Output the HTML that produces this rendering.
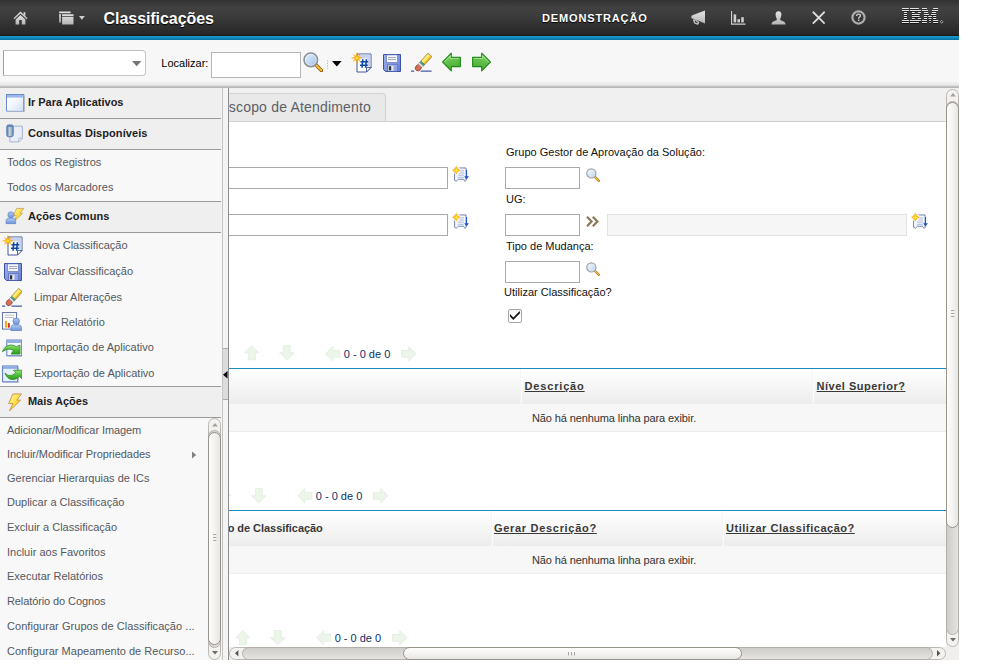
<!DOCTYPE html>
<html><head><meta charset="utf-8"><title>Classificações</title>
<style>
html,body{margin:0;padding:0;background:#fff;}
body{width:989px;height:665px;overflow:hidden;position:relative;font-family:"Liberation Sans",sans-serif;}
.t{position:absolute;white-space:nowrap;font-family:"Liberation Sans",sans-serif;}
#page{position:absolute;left:0;top:0;width:959px;height:660px;overflow:hidden;background:#fff;}
</style></head><body>
<svg width="0" height="0" style="position:absolute"><defs>

<linearGradient id="gGreen" x1="0" y1="0" x2="0" y2="1"><stop offset="0" stop-color="#9be27a"/><stop offset="0.5" stop-color="#4fc03a"/><stop offset="1" stop-color="#2d9a1e"/></linearGradient>
<linearGradient id="gGray" x1="0" y1="0" x2="0" y2="1"><stop offset="0" stop-color="#e4e4e4"/><stop offset="1" stop-color="#b4b4b4"/></linearGradient>
<linearGradient id="gLens" x1="0" y1="0" x2="1" y2="1"><stop offset="0" stop-color="#e8f2fc"/><stop offset="1" stop-color="#9cc0e8"/></linearGradient>
<linearGradient id="gWin" x1="0" y1="0" x2="1" y2="1"><stop offset="0" stop-color="#ffffff"/><stop offset="0.5" stop-color="#f2f6fc"/><stop offset="1" stop-color="#cfdcf2"/></linearGradient>
<linearGradient id="gBlueU" x1="0" y1="0" x2="0" y2="1"><stop offset="0" stop-color="#b4ccf0"/><stop offset="1" stop-color="#6c94d8"/></linearGradient>
<linearGradient id="gYel" x1="0" y1="0" x2="1" y2="1"><stop offset="0" stop-color="#fff6b0"/><stop offset="0.5" stop-color="#ffe040"/><stop offset="1" stop-color="#f4b828"/></linearGradient>
<linearGradient id="gCyl" x1="0" y1="0" x2="1" y2="0"><stop offset="0" stop-color="#5f8098"/><stop offset="0.45" stop-color="#c4d8e4"/><stop offset="1" stop-color="#6c8ca4"/></linearGradient>

<linearGradient id="gSave" x1="0" y1="0" x2="1" y2="1"><stop offset="0" stop-color="#a2b4f2"/><stop offset="1" stop-color="#667ed4"/></linearGradient>
<linearGradient id="gLens2" x1="0" y1="0" x2="1" y2="1"><stop offset="0" stop-color="#f8fbfe"/><stop offset="1" stop-color="#bcd4ec"/></linearGradient>
<linearGradient id="gGreenL" x1="0" y1="0" x2="0.3" y2="1"><stop offset="0" stop-color="#a6e28c"/><stop offset="0.5" stop-color="#66c24e"/><stop offset="1" stop-color="#48aa34"/></linearGradient>
<symbol id="home" viewBox="0 0 15 14">
 <path d="M7.5 0.6L0.4 7.3L1.4 8.3L7.5 2.6L13.6 8.3L14.6 7.3Z" fill="url(#gGray)"/>
 <path d="M7.5 3.9L2.6 8.5V13.4H6.2V9H8.8V13.4H12.4V8.5Z" fill="url(#gGray)"/>
 <rect x="10.6" y="1.2" width="1.8" height="3.4" fill="#d4d4d4"/>
</symbol>
<symbol id="apps" viewBox="0 0 15 14">
 <path d="M0.2 0.6H11.6V2.2H0.2Z M0.2 2.9H1.9V11.4H0.2Z" fill="url(#gGray)"/>
 <path d="M3.1 3.2H14.5V5H3.1Z M3.1 5.8H14.5V13.4H3.1Z" fill="url(#gGray)"/>
</symbol>
<symbol id="mega" viewBox="0 0 15 15">
 <path d="M14 0.4V13.6L4.6 9.4L1.4 8.6C0.7 8.4 0.4 8 0.4 7.4V6.4C0.4 5.8 0.7 5.4 1.4 5.2Z" fill="url(#gGray)"/>
 <path d="M2.6 10L4.6 9.9L7.6 12.6L6.6 14.2L3.6 12.8Z" fill="none" stroke="#c0c0c0" stroke-width="1.3" stroke-linejoin="round"/>
</symbol>
<symbol id="chart" viewBox="0 0 15 14">
 <path d="M0.5 0V13.2H14.5" stroke="#cfcfcf" stroke-width="1.2" fill="none"/>
 <rect x="2.6" y="3.4" width="2.6" height="8" fill="#cfcfcf"/><rect x="6.4" y="8.2" width="2.6" height="3.2" fill="#cfcfcf"/><rect x="10.2" y="6.2" width="2.6" height="5.2" fill="#cfcfcf"/>
</symbol>
<symbol id="user" viewBox="0 0 15 14">
 <path d="M7.5 0.2C9.6 0.2 10.6 1.8 10.4 4C10.2 6 9.4 7 9.2 8C9.1 9 9.6 9.4 11.4 10C13.4 10.7 14.4 11.4 14.6 13.6H0.4C0.6 11.4 1.6 10.7 3.6 10C5.4 9.4 5.9 9 5.8 8C5.6 7 4.8 6 4.6 4C4.4 1.8 5.4 0.2 7.5 0.2Z" fill="url(#gGray)"/>
</symbol>
<symbol id="xclose" viewBox="0 0 14 14"><path d="M0.8 0.8L13.2 13.2M13.2 0.8L0.8 13.2" stroke="#dcdcdc" stroke-width="1.9" fill="none"/></symbol>
<symbol id="help" viewBox="0 0 15 15">
 <circle cx="7.5" cy="7.5" r="6.1" fill="none" stroke="#aeaeae" stroke-width="2.2"/>
 <path d="M5.6 5.9C5.6 4.7 6.5 4.1 7.5 4.1C8.6 4.1 9.4 4.7 9.4 5.7C9.4 7.1 7.6 7 7.6 8.7" stroke="#c8c8c8" stroke-width="1.4" fill="none"/><rect x="6.9" y="9.6" width="1.5" height="1.5" fill="#c8c8c8"/>
</symbol>
<symbol id="ibm" viewBox="0 0 55 25">
<path d="M6.95 5.89h6.95v0.9h-6.95zM14.91 5.89h9.01v0.9h-9.01zM26.97 5.89h5.01v0.9h-5.01zM38.10 5.89h5.01v0.9h-5.01zM6.95 7.90h6.95v0.9h-6.95zM14.91 7.90h10.96v0.9h-10.96zM26.97 7.90h6.12v0.9h-6.12zM36.99 7.90h6.12v0.9h-6.12zM8.90 9.95h3.06v0.9h-3.06zM16.96 9.95h2.78v0.9h-2.78zM22.80 9.95h3.06v0.9h-3.06zM28.92 9.95h4.17v0.9h-4.17zM36.99 9.95h4.17v0.9h-4.17zM8.90 12.01h3.06v0.9h-3.06zM16.96 12.01h7.79v0.9h-7.79zM28.92 12.01h5.01v0.9h-5.01zM36.15 12.01h5.01v0.9h-5.01zM8.90 14.01h3.06v0.9h-3.06zM16.96 14.01h7.79v0.9h-7.79zM28.92 14.01h3.06v0.9h-3.06zM33.09 14.01h3.89v0.9h-3.89zM38.10 14.01h3.06v0.9h-3.06zM8.90 15.96h3.06v0.9h-3.06zM16.96 15.96h2.78v0.9h-2.78zM22.80 15.96h3.06v0.9h-3.06zM28.92 15.96h3.06v0.9h-3.06zM33.65 15.96h2.78v0.9h-2.78zM38.10 15.96h3.06v0.9h-3.06zM6.95 18.02h6.95v0.9h-6.95zM14.91 18.02h10.96v0.9h-10.96zM26.97 18.02h5.01v0.9h-5.01zM34.20 18.02h1.67v0.9h-1.67zM38.10 18.02h5.01v0.9h-5.01zM6.95 20.08h6.95v0.9h-6.95zM14.91 20.08h9.01v0.9h-9.01zM26.97 20.08h5.01v0.9h-5.01zM34.48 20.08h1.11v0.9h-1.11zM38.10 20.08h5.01v0.9h-5.01z" fill="#000" fill-opacity=".55"/>
<path d="M6.95 4.89h6.95v1h-6.95zM14.91 4.89h9.01v1h-9.01zM26.97 4.89h5.01v1h-5.01zM38.10 4.89h5.01v1h-5.01zM6.95 6.90h6.95v1h-6.95zM14.91 6.90h10.96v1h-10.96zM26.97 6.90h6.12v1h-6.12zM36.99 6.90h6.12v1h-6.12zM8.90 8.95h3.06v1h-3.06zM16.96 8.95h2.78v1h-2.78zM22.80 8.95h3.06v1h-3.06zM28.92 8.95h4.17v1h-4.17zM36.99 8.95h4.17v1h-4.17zM8.90 11.01h3.06v1h-3.06zM16.96 11.01h7.79v1h-7.79zM28.92 11.01h5.01v1h-5.01zM36.15 11.01h5.01v1h-5.01zM8.90 13.01h3.06v1h-3.06zM16.96 13.01h7.79v1h-7.79zM28.92 13.01h3.06v1h-3.06zM33.09 13.01h3.89v1h-3.89zM38.10 13.01h3.06v1h-3.06zM8.90 14.96h3.06v1h-3.06zM16.96 14.96h2.78v1h-2.78zM22.80 14.96h3.06v1h-3.06zM28.92 14.96h3.06v1h-3.06zM33.65 14.96h2.78v1h-2.78zM38.10 14.96h3.06v1h-3.06zM6.95 17.02h6.95v1h-6.95zM14.91 17.02h10.96v1h-10.96zM26.97 17.02h5.01v1h-5.01zM34.20 17.02h1.67v1h-1.67zM38.10 17.02h5.01v1h-5.01zM6.95 19.08h6.95v1h-6.95zM14.91 19.08h9.01v1h-9.01zM26.97 19.08h5.01v1h-5.01zM34.48 19.08h1.11v1h-1.11zM38.10 19.08h5.01v1h-5.01z" fill="#e2e2e2"/>
<path d="M46.6 17.3L48 18.8L46.6 20.3L45.2 18.8Z" fill="none" stroke="#c8c8c8" stroke-width="0.7"/>
</symbol>
<symbol id="mag" viewBox="0 0 20 20">
 <path d="M11.8 11.8L18 18" stroke="#8a5a10" stroke-width="3.4" stroke-linecap="round"/>
 <path d="M12 12L17.8 17.8" stroke="#f8b830" stroke-width="2" stroke-linecap="round"/>
 <circle cx="7.6" cy="7.6" r="6.6" fill="url(#gLens)" stroke="#8a8e94" stroke-width="1.6"/>
 <circle cx="7.6" cy="7.6" r="5.4" fill="none" stroke="#fff" stroke-opacity=".6" stroke-width="0.8"/>
</symbol>
<symbol id="mags" viewBox="0 0 20 20">
 <path d="M11.8 11.8L18 18" stroke="#9a7020" stroke-width="3.4" stroke-linecap="round"/>
 <path d="M12 12L17.8 17.8" stroke="#f8c040" stroke-width="1.8" stroke-linecap="round"/>
 <circle cx="7.6" cy="7.6" r="6.5" fill="url(#gLens2)" stroke="#a0a4aa" stroke-width="1.7"/>
</symbol>
<symbol id="star" viewBox="0 0 12 12"><path d="M6 0L6.75 4.2L9.7 2.3L7.8 5.25L12 6L7.8 6.75L9.7 9.7L6.75 7.8L6 12L5.25 7.8L2.3 9.7L4.2 6.75L0 6L4.2 5.25L2.3 2.3L5.25 4.2Z" fill="#ffa200" stroke="#ffa200" stroke-width="0.35"/><circle cx="6" cy="6" r="1.7" fill="#ffe030"/></symbol>
<symbol id="newdoc" viewBox="0 0 21 21">
 <path d="M6 2H20V15.5L15.5 20H6Z" fill="#fff" stroke="#44549a" stroke-width="1"/>
 <path d="M8.5 2.5H19.5V14.5H16.5V6.5H8.5Z" fill="#c8d4ee"/>
 <path d="M20 15.5H15.5V20Z" fill="#fff" stroke="#44549a" stroke-width="0.9"/>
 <path d="M11.8 7.2L11 15.8M15.4 7.2L14.6 15.8M9.4 9.8H17.2M9 13.2H16.8" stroke="#0c48a4" stroke-width="1.6" fill="none"/>
 <use href="#star" x="0.2" y="0.2" width="11.4" height="11.4"/>
</symbol>
<symbol id="save" viewBox="0 0 18 18">
 <path d="M0.5 0.5H17.5V17.5H2.5L0.5 15.5Z" fill="url(#gSave)" stroke="#3c50a4" stroke-width="1"/>
 <rect x="3.5" y="0.9" width="11" height="7.6" fill="#f6f8fe" stroke="#5468b4" stroke-width="0.6"/>
 <path d="M5 3.5H13M5 5.5H13" stroke="#a0a8c4" stroke-width="1"/>
 <rect x="4.5" y="11" width="10" height="6.2" fill="#e4e8f4" stroke="#3c50a4" stroke-width="0.6"/>
 <rect x="10.5" y="11.4" width="3.6" height="5.6" fill="#8ea2e4"/>
 <rect x="5.8" y="12.2" width="2.4" height="4.2" fill="#2c3444"/>
</symbol>
<symbol id="eraser" viewBox="0 0 21 19">
 <path d="M0 18.2H3.2M9.6 18.2H20.6" stroke="#4a58a8" stroke-width="1.3"/>
 <ellipse cx="7.4" cy="14.6" rx="3.5" ry="2.8" transform="rotate(-48 7.4 14.6)" fill="#d4705a" stroke="#8a3a28" stroke-width="0.7"/>
 <path d="M17 0.2L20.9 3.7L13.7 11.7L9.8 8.2Z" fill="url(#gYel)" stroke="#8c7424" stroke-width="0.7"/>
 <path d="M18 1.8L11.2 9.2" stroke="#fff8c8" stroke-width="1" stroke-opacity=".8"/>
 <path d="M19.9 3.3L13.2 10.9" stroke="#c89a18" stroke-width="1" stroke-opacity=".7"/>
 <path d="M9.8 8.2L13.7 11.7L12.3 13.2L8.4 9.7Z" fill="#4c9c94" stroke="#2c6c68" stroke-width="0.4"/>
 <path d="M8.4 9.7L12.3 13.2L11.2 14.4L7.3 10.9Z" fill="#f4f4f4" stroke="#888" stroke-width="0.4"/>
</symbol>
<symbol id="garrow" viewBox="0 0 20 20"><path d="M1.6 10L10.3 1.1V5.4H19.4V14.6H10.3V18.9Z" fill="url(#gGreenL)" stroke="#1f8a1a" stroke-width="1.1" stroke-linejoin="round"/><path d="M3.2 10L9.3 3.8V6.4H18.4" fill="none" stroke="#c8f0b4" stroke-opacity=".7" stroke-width="0.9"/></symbol>
<symbol id="parrow" viewBox="0 0 15 15"><path d="M0.5 7.5L7.5 0.5V4.2H14.5V10.8H7.5V14.5Z" fill="#edf5eb" stroke="#e2eee0" stroke-width="0.8" stroke-linejoin="round"/></symbol>
<symbol id="window" viewBox="0 0 19 18">
 <path d="M1.5 17.6H18.6V1.5" stroke="#c0c4d0" stroke-width="0.9" fill="none"/>
 <rect x="0.5" y="0.5" width="17.2" height="16.4" fill="url(#gWin)" stroke="#6a8acc" stroke-width="1"/>
 <rect x="1" y="1" width="16.2" height="2.6" fill="#9cb8e8"/>
 <path d="M1.5 4V16.4H17" stroke="#fff" stroke-width="0.8" fill="none" stroke-opacity=".8"/>
</symbol>
<symbol id="query" viewBox="0 0 18 19">
 <path d="M3.9 2.2H16.4V14.2L12.8 17.9H3.9Z" fill="#e9edf9" stroke="#a4acd0" stroke-width="0.9"/>
 <path d="M16.4 14.2H12.8V17.9Z" fill="#fff" stroke="#a4acd0" stroke-width="0.8"/>
 <rect x="0.8" y="0.9" width="6.4" height="11.8" rx="1.8" fill="url(#gCyl)" stroke="#4a74a8" stroke-width="0.9"/>
 <ellipse cx="4" cy="1.9" rx="3" ry="1" fill="#5c86b8"/>
</symbol>
<symbol id="bolt" viewBox="0 0 14 18.6"><path d="M4.9 0.9H13.5L8.8 7.2H12.6L1.4 18L4.9 10.6H0.6Z" fill="url(#gYel)" stroke="#c89858" stroke-width="1" stroke-linejoin="round"/></symbol>
<symbol id="bluser" viewBox="0 0 12 14">
 <circle cx="6" cy="3.8" r="3.3" fill="url(#gBlueU)" stroke="#5c84cc" stroke-width="0.8"/>
 <path d="M0.6 13.4V10.4C0.6 8.4 2.2 7.4 3.6 7.4H8.4C9.8 7.4 11.4 8.4 11.4 10.4V13.4Z" fill="url(#gBlueU)" stroke="#5c84cc" stroke-width="0.8"/>
</symbol>
<symbol id="acoes" viewBox="0 0 20 18">
 <path d="M11.6 1.4H18.8L15 6.2H17.6L9.4 14.2L11.4 8.6H8.4Z" fill="url(#gYel)" stroke="#c8a060" stroke-width="0.8" stroke-linejoin="round"/>
 <use href="#bluser" x="0.4" y="3.8" width="11" height="14"/>
</symbol>
<symbol id="report" viewBox="0 0 21 20">
 <rect x="0.5" y="0.5" width="14.5" height="17" fill="#fff" stroke="#5a6ea8" stroke-width="1"/>
 <path d="M3 3.2H12.6M3 5.6H12.6" stroke="#b4bcd0" stroke-width="1"/>
 <rect x="3" y="9" width="2" height="7" fill="#f0a810"/><rect x="6" y="11.4" width="2" height="4.6" fill="#d82818"/>
 <use href="#bluser" x="8.4" y="5.6" width="12.4" height="14.2"/>
</symbol>
<symbol id="import" viewBox="0 0 21 18">
 <path d="M5.6 17.4H20.8V1.5" stroke="#c0c4d0" stroke-width="0.8" fill="none"/>
 <rect x="4.9" y="0.9" width="15.2" height="16" fill="#f4f8fe" stroke="#5878c0" stroke-width="1"/>
 <rect x="5.4" y="1.4" width="14.2" height="2.4" fill="#8cacE4"/>
 <path d="M0.4 12.8C2.5 6.6 9 4 14.6 7.6L18.4 6V15.2H9.2L11.8 11.6C8 9.2 4 10 0.4 12.8Z" fill="url(#gGreen)" stroke="#2c8a1c" stroke-width="0.8" stroke-linejoin="round"/>
</symbol>
<symbol id="export" viewBox="0 0 21 18">
 <path d="M1.2 17.6H16.8V1.5" stroke="#c0c4d0" stroke-width="0.8" fill="none"/>
 <rect x="0.6" y="0.8" width="15.4" height="16.2" fill="#e4eefc" stroke="#5878c0" stroke-width="1"/>
 <rect x="1.1" y="1.3" width="14.4" height="2.4" fill="#8cace4"/>
 <path d="M3 8C6 11.4 10.4 11.4 14 7.6L11.8 5.2H20.2V13.8L17.8 11.4C13 16.8 5.6 15.6 3 8Z" fill="url(#gGreen)" stroke="#2c8a1c" stroke-width="0.8" stroke-linejoin="round"/>
</symbol>
<symbol id="detail" viewBox="0 0 18 17">
 <path d="M2.6 2H14.4V14.6L13.4 15.8L11.6 13.6H6.6L4.4 15.6L2.6 14.6Z" fill="#f4f6fc" stroke="#6474a8" stroke-width="0.9" stroke-linejoin="round"/>
 <path d="M6 5H12.2M6 7.2H12.2M6 9.4H12.2M6 11.6H12.2" stroke="#9cacd4" stroke-width="0.8"/>
 <path d="M14.9 4.2V12.4" stroke="#2454c4" stroke-width="1.1" fill="none"/>
 <path d="M12.5 10.4H17.3L14.9 13.8Z" fill="#2454c4"/>
 <circle cx="4.4" cy="4.4" r="4.1" fill="#fff" fill-opacity=".75"/>
 <path d="M4.4 0.6L5.7 3.1L8.2 4.4L5.7 5.7L4.4 8.2L3.1 5.7L0.6 4.4L3.1 3.1Z" fill="#ffb000" stroke="#ffb000" stroke-width="0.8" stroke-linejoin="round"/>
 <path d="M4.4 2.2V6.6M2.2 4.4H6.6" stroke="#ffe650" stroke-width="1.2"/>
</symbol>
<symbol id="dblarrow" viewBox="0 0 13 11"><path d="M1 0.8L5.6 5.5L1 10.2M6.8 0.8L11.4 5.5L6.8 10.2" stroke="#8a7858" stroke-width="2.2" fill="none"/></symbol>

</defs></svg>
<div id="page">
<div style="position:absolute;left:229px;top:88px;width:717px;height:34px;background:#f0f0f0;"></div>
<div style="position:absolute;left:229px;top:121px;width:717px;height:1px;background:#cfcfcf;"></div>
<div style="position:absolute;left:229px;top:93px;width:157px;height:29px;box-sizing:border-box;background:#e9e9e9;border:1px solid #d2d2d2;border-left:none;border-radius:0 4px 0 0;"></div>
<span class="t" style="left:228.80px;top:96.75px;font-size:14px;line-height:20px;color:#5c6066;letter-spacing:0.187px;">scopo de Atendimento</span>
<div style="position:absolute;left:229px;top:122px;width:717px;height:525px;background:#fff;"></div>
<div style="position:absolute;left:229px;top:167px;width:219px;height:22px;box-sizing:border-box;border:1px solid #aaa;background:#fff;border-left:none;"></div>
<div style="position:absolute;left:229px;top:214px;width:219px;height:22px;box-sizing:border-box;border:1px solid #aaa;background:#fff;border-left:none;"></div>
<span class="t" style="left:506.00px;top:142.39px;font-size:11px;line-height:20px;color:#111;letter-spacing:0.024px;">Grupo Gestor de Aprovação da Solução:</span>
<div style="position:absolute;left:505px;top:167px;width:75px;height:22px;box-sizing:border-box;border:1px solid #aaa;background:#fff;"></div>
<span class="t" style="left:506.00px;top:189.29px;font-size:11px;line-height:20px;color:#111;">UG:</span>
<div style="position:absolute;left:505px;top:214px;width:75px;height:22px;box-sizing:border-box;border:1px solid #aaa;background:#fff;"></div>
<div style="position:absolute;left:607px;top:214px;width:300px;height:22px;box-sizing:border-box;border:1px solid #e2e2e2;background:#f6f6f6;"></div>
<span class="t" style="left:506.00px;top:236.09px;font-size:11px;line-height:20px;color:#111;">Tipo de Mudança:</span>
<div style="position:absolute;left:505px;top:261px;width:75px;height:22px;box-sizing:border-box;border:1px solid #aaa;background:#fff;"></div>
<span class="t" style="left:504.10px;top:282.39px;font-size:11px;line-height:20px;color:#111;">Utilizar Classificação?</span>
<div style="position:absolute;left:508px;top:309px;width:14px;height:14px;box-sizing:border-box;border:1px solid #a6a6a6;border-radius:2px;background:linear-gradient(#f2f2f2,#fff 60%);"><svg width="12" height="12" style="position:absolute;left:0;top:0"><path d="M1 4L4.3 7.5L10.7 1L11 3.3L4.3 10L1 6.4Z" fill="#111"/></svg></div>
<div style="position:absolute;left:229px;top:368px;width:717px;height:1px;background:#1c8cc0;"></div>
<div style="position:absolute;left:229px;top:369px;width:717px;height:35px;background:linear-gradient(#fff,#f6f6f6 50%,#ececec);"></div>
<div style="position:absolute;left:229px;top:404px;width:717px;height:28px;background:#f7f7f7;border-bottom:1px solid #ececec;box-sizing:border-box;"></div>
<div style="position:absolute;left:520px;top:369px;width:1px;height:35px;background:rgba(255,255,255,.75);border-left:1px solid rgba(0,0,0,.035);"></div>
<div style="position:absolute;left:812px;top:369px;width:1px;height:35px;background:rgba(255,255,255,.75);border-left:1px solid rgba(0,0,0,.035);"></div>
<span class="t" style="left:524.60px;top:375.89px;font-size:11px;line-height:20px;color:#393939;font-weight:bold;letter-spacing:0.824px;text-decoration:underline;">Descrição</span>
<span class="t" style="left:816.60px;top:375.89px;font-size:11px;line-height:20px;color:#393939;font-weight:bold;letter-spacing:0.500px;text-decoration:underline;">Nível Superior?</span>
<span class="t" style="left:531.90px;top:407.69px;font-size:11px;line-height:20px;color:#333;letter-spacing:-0.102px;">Não há nenhuma linha para exibir.</span>
<div style="position:absolute;left:229px;top:510px;width:717px;height:1px;background:#1c8cc0;"></div>
<div style="position:absolute;left:229px;top:511px;width:717px;height:35px;background:linear-gradient(#fff,#f6f6f6 50%,#ececec);"></div>
<div style="position:absolute;left:229px;top:546px;width:717px;height:28px;background:#f7f7f7;border-bottom:1px solid #ececec;box-sizing:border-box;"></div>
<div style="position:absolute;left:491px;top:511px;width:1px;height:35px;background:rgba(255,255,255,.75);border-left:1px solid rgba(0,0,0,.035);"></div>
<div style="position:absolute;left:722px;top:511px;width:1px;height:35px;background:rgba(255,255,255,.75);border-left:1px solid rgba(0,0,0,.035);"></div>
<span class="t" style="left:227.70px;top:517.89px;font-size:11px;line-height:20px;color:#393939;font-weight:bold;letter-spacing:-0.049px;">o de Classificação</span>
<span class="t" style="left:494.00px;top:517.89px;font-size:11px;line-height:20px;color:#393939;font-weight:bold;letter-spacing:0.693px;text-decoration:underline;">Gerar Descrição?</span>
<span class="t" style="left:726.00px;top:517.89px;font-size:11px;line-height:20px;color:#393939;font-weight:bold;letter-spacing:0.523px;text-decoration:underline;">Utilizar Classificação?</span>
<span class="t" style="left:531.90px;top:549.69px;font-size:11px;line-height:20px;color:#333;letter-spacing:-0.102px;">Não há nenhuma linha para exibir.</span>
<svg style="position:absolute;left:452.2px;top:166px;" width="17.6" height="16.6"><use href="#detail"/></svg>
<svg style="position:absolute;left:452.2px;top:213.2px;" width="17.6" height="16.6"><use href="#detail"/></svg>
<svg style="position:absolute;left:911px;top:213.2px;" width="17.6" height="16.6"><use href="#detail"/></svg>
<svg style="position:absolute;left:585.6px;top:168.2px;" width="14.2" height="14.2"><use href="#mags"/></svg>
<svg style="position:absolute;left:585.6px;top:262.4px;" width="14.2" height="14.2"><use href="#mags"/></svg>
<svg style="position:absolute;left:586px;top:216px;" width="13" height="11"><use href="#dblarrow"/></svg>
<svg style="position:absolute;left:244.0px;top:345.09999999999997px;transform:rotate(90deg);" width="15.6" height="15.6"><use href="#parrow"/></svg>
<svg style="position:absolute;left:279.0px;top:345.3px;transform:rotate(-90deg);" width="15.6" height="15.6"><use href="#parrow"/></svg>
<svg style="position:absolute;left:325.0px;top:345.5px;" width="15.6" height="15.6"><use href="#parrow"/></svg>
<svg style="position:absolute;left:400.6px;top:345.5px;transform:scaleX(-1);" width="15.6" height="15.6"><use href="#parrow"/></svg>
<span class="t" style="left:343.80px;top:343.69px;font-size:11px;line-height:20px;color:#0b2f6a;">0 - 0 de 0</span>
<svg style="position:absolute;left:216.0px;top:487.5px;transform:rotate(90deg);" width="15.6" height="15.6"><use href="#parrow"/></svg>
<svg style="position:absolute;left:251.0px;top:487.70000000000005px;transform:rotate(-90deg);" width="15.6" height="15.6"><use href="#parrow"/></svg>
<svg style="position:absolute;left:297.0px;top:487.90000000000003px;" width="15.6" height="15.6"><use href="#parrow"/></svg>
<svg style="position:absolute;left:372.6px;top:487.90000000000003px;transform:scaleX(-1);" width="15.6" height="15.6"><use href="#parrow"/></svg>
<span class="t" style="left:315.80px;top:486.09px;font-size:11px;line-height:20px;color:#0b2f6a;">0 - 0 de 0</span>
<svg style="position:absolute;left:234.9px;top:629.6999999999999px;transform:rotate(90deg);" width="15.6" height="15.6"><use href="#parrow"/></svg>
<svg style="position:absolute;left:269.9px;top:629.9px;transform:rotate(-90deg);" width="15.6" height="15.6"><use href="#parrow"/></svg>
<svg style="position:absolute;left:315.9px;top:630.0999999999999px;" width="15.6" height="15.6"><use href="#parrow"/></svg>
<svg style="position:absolute;left:391.5px;top:630.0999999999999px;transform:scaleX(-1);" width="15.6" height="15.6"><use href="#parrow"/></svg>
<span class="t" style="left:334.70px;top:628.29px;font-size:11px;line-height:20px;color:#0b2f6a;">0 - 0 de 0</span>
<div style="position:absolute;left:0px;top:88px;width:221px;height:572px;background:#f8f8f8;"></div>
<div style="position:absolute;left:0px;top:88px;width:221px;height:30px;background:#efefef;"></div>
<div style="position:absolute;left:0px;top:118px;width:221px;height:1px;background:#9a9a9a;"></div>
<span class="t" style="left:27.90px;top:91.89px;font-size:11px;line-height:20px;color:#222;font-weight:bold;">Ir Para Aplicativos</span>
<div style="position:absolute;left:0px;top:119px;width:221px;height:30px;background:#efefef;"></div>
<div style="position:absolute;left:0px;top:149px;width:221px;height:1px;background:#9a9a9a;"></div>
<span class="t" style="left:27.90px;top:122.89px;font-size:11px;line-height:20px;color:#222;font-weight:bold;letter-spacing:0.078px;">Consultas Disponíveis</span>
<span class="t" style="left:7.00px;top:151.99px;font-size:11px;line-height:20px;color:#54585f;letter-spacing:0.048px;">Todos os Registros</span>
<span class="t" style="left:7.00px;top:177.19px;font-size:11px;line-height:20px;color:#54585f;letter-spacing:0.071px;">Todos os Marcadores</span>
<div style="position:absolute;left:0px;top:201px;width:221px;height:1px;background:#9a9a9a;"></div>
<div style="position:absolute;left:0px;top:202px;width:221px;height:30px;background:#efefef;"></div>
<div style="position:absolute;left:0px;top:232px;width:221px;height:1px;background:#9a9a9a;"></div>
<span class="t" style="left:27.90px;top:205.89px;font-size:11px;line-height:20px;color:#222;font-weight:bold;letter-spacing:0.136px;">Ações Comuns</span>
<span class="t" style="left:34.00px;top:234.89px;font-size:11px;line-height:20px;color:#54585f;">Nova Classificação</span>
<span class="t" style="left:34.00px;top:261.19px;font-size:11px;line-height:20px;color:#54585f;">Salvar Classificação</span>
<span class="t" style="left:34.00px;top:287.19px;font-size:11px;line-height:20px;color:#54585f;">Limpar Alterações</span>
<span class="t" style="left:34.00px;top:311.99px;font-size:11px;line-height:20px;color:#54585f;">Criar Relatório</span>
<span class="t" style="left:34.00px;top:337.19px;font-size:11px;line-height:20px;color:#54585f;">Importação de Aplicativo</span>
<span class="t" style="left:34.00px;top:362.99px;font-size:11px;line-height:20px;color:#54585f;">Exportação de Aplicativo</span>
<div style="position:absolute;left:0px;top:386px;width:221px;height:1px;background:#9a9a9a;"></div>
<div style="position:absolute;left:0px;top:387px;width:221px;height:30px;background:#efefef;"></div>
<div style="position:absolute;left:0px;top:417px;width:221px;height:1px;background:#9a9a9a;"></div>
<span class="t" style="left:27.90px;top:390.89px;font-size:11px;line-height:20px;color:#222;font-weight:bold;">Mais Ações</span>
<span class="t" style="left:7.00px;top:419.89px;font-size:11px;line-height:20px;color:#54585f;letter-spacing:-0.082px;">Adicionar/Modificar Imagem</span>
<span class="t" style="left:7.00px;top:444.09px;font-size:11px;line-height:20px;color:#54585f;letter-spacing:-0.070px;">Incluir/Modificar Propriedades</span>
<span class="t" style="left:7.00px;top:468.19px;font-size:11px;line-height:20px;color:#54585f;">Gerenciar Hierarquias de ICs</span>
<span class="t" style="left:7.00px;top:492.19px;font-size:11px;line-height:20px;color:#54585f;">Duplicar a Classificação</span>
<span class="t" style="left:7.00px;top:517.19px;font-size:11px;line-height:20px;color:#54585f;">Excluir a Classificação</span>
<span class="t" style="left:7.00px;top:541.79px;font-size:11px;line-height:20px;color:#54585f;">Incluir aos Favoritos</span>
<span class="t" style="left:7.00px;top:566.19px;font-size:11px;line-height:20px;color:#54585f;">Executar Relatórios</span>
<span class="t" style="left:7.00px;top:590.99px;font-size:11px;line-height:20px;color:#54585f;letter-spacing:-0.099px;">Relatório do Cognos</span>
<span class="t" style="left:7.00px;top:616.19px;font-size:11px;line-height:20px;color:#54585f;letter-spacing:0.046px;">Configurar Grupos de Classificação ...</span>
<span class="t" style="left:7.00px;top:640.89px;font-size:11px;line-height:20px;color:#54585f;letter-spacing:0.014px;">Configurar Mapeamento de Recurso...</span>
<svg style="position:absolute;left:192px;top:451px" width="5" height="8"><path d="M0 0.4L4.2 4L0 7.6Z" fill="#808080"/></svg>
<svg style="position:absolute;left:5.6px;top:94px;" width="19" height="18"><use href="#window"/></svg>
<svg style="position:absolute;left:5.6px;top:123.6px;" width="18" height="19"><use href="#query"/></svg>
<svg style="position:absolute;left:4.6px;top:207px;" width="20" height="18"><use href="#acoes"/></svg>
<svg style="position:absolute;left:1.5px;top:234.5px;" width="21" height="21"><use href="#newdoc"/></svg>
<svg style="position:absolute;left:4px;top:263px;" width="18" height="18"><use href="#save"/></svg>
<svg style="position:absolute;left:1.8px;top:288.4px;" width="20.6" height="19"><use href="#eraser"/></svg>
<svg style="position:absolute;left:1.8px;top:312px;" width="20.4" height="19.6"><use href="#report"/></svg>
<svg style="position:absolute;left:1.6px;top:338.8px;" width="20.6" height="18"><use href="#import"/></svg>
<svg style="position:absolute;left:1.8px;top:364.8px;" width="20.6" height="18"><use href="#export"/></svg>
<svg style="position:absolute;left:8px;top:392.6px;" width="14" height="18.6"><use href="#bolt"/></svg>
<div style="position:absolute;left:221px;top:88px;width:8px;height:572px;background:#f4f4f4;"></div>
<div style="position:absolute;left:222px;top:88px;width:1px;height:572px;background:#c4c4c4;"></div>
<div style="position:absolute;left:228px;top:88px;width:1px;height:572px;background:#8e8e8e;"></div>
<div style="position:absolute;left:223px;top:348px;width:5px;height:52px;background:#dcdcdc;border-top:1px solid #aaa;border-bottom:1px solid #aaa;box-sizing:border-box;"></div>
<svg style="position:absolute;left:223px;top:371px" width="5" height="8"><path d="M4.5 0L0 3.7L4.5 7.4Z" fill="#000"/></svg>
<div style="position:absolute;left:0px;top:0px;width:959px;height:36px;background:linear-gradient(#323232 0%,#414141 22%,#3b3b3b 45%,#313131 70%,#282828 93%,#1b1b1b 100%);"></div>
<div style="position:absolute;left:0px;top:36px;width:959px;height:4px;background:linear-gradient(#1c9ccd,#0b7bae 80%,#086c9c);"></div>
<span class="t" style="left:103.60px;top:8.76px;font-size:16px;line-height:20px;color:#fff;font-weight:bold;letter-spacing:-0.063px;text-shadow:0 1px 1px #000;">Classificações</span>
<span class="t" style="left:542.00px;top:7.99px;font-size:11px;line-height:20px;color:#fff;font-weight:bold;letter-spacing:0.856px;text-shadow:0 1px 1px #000;">DEMONSTRAÇÃO</span>
<div style="position:absolute;left:0px;top:40px;width:959px;height:48px;background:linear-gradient(#f7f7f7 0px,#f7f7f7 41.5px,#eee 42.5px,#e9e9e9 45px,#d2d2d2 46px,#b2b2b2 47px,#bebebe 48px);"></div>
<div style="position:absolute;left:3px;top:50px;width:143px;height:26px;box-sizing:border-box;border:1px solid #c6c6c6;border-left-color:#9e9e9e;border-top-color:#bdbdbd;border-radius:0 4px 4px 0;background:#fff;"></div>
<svg style="position:absolute;left:131.8px;top:60.8px" width="10" height="6"><path d="M0 0H9.4L4.7 5.2Z" fill="#777"/></svg>
<span class="t" style="left:161.30px;top:52.89px;font-size:11px;line-height:20px;color:#000;">Localizar:</span>
<div style="position:absolute;left:211px;top:52px;width:90px;height:26px;box-sizing:border-box;border:1px solid #b5b5b5;background:#fff;"></div>
<svg style="position:absolute;left:12.6px;top:10.6px;" width="15" height="14"><use href="#home"/></svg>
<svg style="position:absolute;left:58.6px;top:10.9px;" width="15" height="14"><use href="#apps"/></svg>
<svg style="position:absolute;left:78.6px;top:15.8px" width="6" height="4"><path d="M0 0H5.8L2.9 3.8Z" fill="#cfcfcf"/></svg>
<svg style="position:absolute;left:691px;top:9.6px;" width="15" height="15"><use href="#mega"/></svg>
<svg style="position:absolute;left:730.6px;top:10.6px;" width="15" height="14"><use href="#chart"/></svg>
<svg style="position:absolute;left:770.9px;top:10.8px;" width="15" height="14"><use href="#user"/></svg>
<svg style="position:absolute;left:811.7px;top:10.9px;" width="13.5" height="13.4"><use href="#xclose"/></svg>
<svg style="position:absolute;left:851px;top:9.9px;" width="15" height="15"><use href="#help"/></svg>
<svg style="position:absolute;left:895px;top:3px;" width="55" height="25"><use href="#ibm"/></svg>
<svg style="position:absolute;left:302.6px;top:51.6px;" width="20.5" height="20.5"><use href="#mag"/></svg>
<svg style="position:absolute;left:326.5px;top:59.5px" width="2" height="9"><path d="M0.5 0.5V8.5" stroke="#aaa8c8" stroke-width="1" stroke-dasharray="1 1.4"/></svg>
<svg style="position:absolute;left:332px;top:61px" width="10" height="6"><path d="M0 0H9.6L4.8 5.4Z" fill="#000"/></svg>
<svg style="position:absolute;left:350.5px;top:51.5px;" width="21" height="21"><use href="#newdoc"/></svg>
<svg style="position:absolute;left:383px;top:54px;" width="18" height="18"><use href="#save"/></svg>
<svg style="position:absolute;left:410.8px;top:53.2px;" width="21" height="19"><use href="#eraser"/></svg>
<svg style="position:absolute;left:441.4px;top:52px;" width="20" height="20"><use href="#garrow"/></svg>
<svg style="position:absolute;left:471.75px;top:52px;transform:scaleX(-1);" width="20" height="20"><use href="#garrow"/></svg>
<div style="position:absolute;left:946px;top:88px;width:13px;height:572px;background:#f0efee;"></div>
<div style="position:absolute;left:946px;top:88.6px;width:13px;height:558.0px;box-sizing:border-box;border:1px solid #bcb8b1;border-radius:6.5px;background:#f3f2f0;"></div>
<div style="position:absolute;left:946px;top:100.6px;width:13px;height:534.0px;box-sizing:border-box;border:1px solid #b4b0a9;border-radius:6.5px;background:linear-gradient(90deg,#cfcdc9,#e6e4e1);"></div>
<div style="position:absolute;left:946px;top:102px;width:13px;height:426px;box-sizing:border-box;border:1px solid #98938b;border-radius:6.5px;background:linear-gradient(90deg,#fdfdfc,#f4f3f1 50%,#e8e6e3);"></div>
<svg style="position:absolute;left:949.5px;top:93.1px" width="6" height="4"><path d="M0 3.4L3 0L6 3.4Z" fill="#a2a2a2"/></svg>
<svg style="position:absolute;left:949.5px;top:637.8000000000001px" width="6" height="4"><path d="M0 0L3 3.4L6 0Z" fill="#6c6c6c"/></svg>
<svg style="position:absolute;left:950.5px;top:310.0px" width="4" height="8"><path d="M0 0.5H3.4M0 3.5H3.4M0 6.5H3.4" stroke="#a09c96" stroke-width="0.9"/></svg>
<div style="position:absolute;left:229px;top:647px;width:717px;height:13px;background:#f0efee;"></div>
<div style="position:absolute;left:229px;top:647px;width:717px;height:13px;box-sizing:border-box;border:1px solid #bcb8b1;border-radius:6.5px;background:#f3f2f0;"></div>
<div style="position:absolute;left:242px;top:647px;width:691px;height:13px;box-sizing:border-box;border:1px solid #b4b0a9;border-radius:6.5px;background:linear-gradient(#cfcdc9,#e6e4e1);"></div>
<div style="position:absolute;left:402.6px;top:647px;width:339.79999999999995px;height:13px;box-sizing:border-box;border:1px solid #98938b;border-radius:6.5px;background:linear-gradient(#fdfdfc,#f4f3f1 50%,#e8e6e3);"></div>
<svg style="position:absolute;left:234.6px;top:650.2px" width="4" height="7"><path d="M3.4 0L0 3.3L3.4 6.6Z" fill="#555"/></svg>
<svg style="position:absolute;left:937.4px;top:650.2px" width="4" height="7"><path d="M0 0L3.4 3.3L0 6.6Z" fill="#555"/></svg>
<svg style="position:absolute;left:568.0px;top:651.6px" width="8" height="4"><path d="M0.5 0V3.4M3.5 0V3.4M6.5 0V3.4" stroke="#a09c96" stroke-width="0.9"/></svg>
<div style="position:absolute;left:208px;top:418px;width:13px;height:242px;background:#f4f4f3;"></div>
<div style="position:absolute;left:208px;top:418px;width:13px;height:242px;box-sizing:border-box;border:1px solid #bcb8b1;border-radius:6.5px;background:#f3f2f0;"></div>
<div style="position:absolute;left:208px;top:430px;width:13px;height:218px;box-sizing:border-box;border:1px solid #b4b0a9;border-radius:6.5px;background:linear-gradient(90deg,#cfcdc9,#e6e4e1);"></div>
<div style="position:absolute;left:208px;top:432px;width:13px;height:212.79999999999995px;box-sizing:border-box;border:1px solid #98938b;border-radius:6.5px;background:linear-gradient(90deg,#fdfdfc,#f4f3f1 50%,#e8e6e3);"></div>
<svg style="position:absolute;left:211.5px;top:422.5px" width="6" height="4"><path d="M0 3.4L3 0L6 3.4Z" fill="#a2a2a2"/></svg>
<svg style="position:absolute;left:211.5px;top:651.2px" width="6" height="4"><path d="M0 0L3 3.4L6 0Z" fill="#6c6c6c"/></svg>
<svg style="position:absolute;left:212.5px;top:534.0px" width="4" height="8"><path d="M0 0.5H3.4M0 3.5H3.4M0 6.5H3.4" stroke="#a09c96" stroke-width="0.9"/></svg>
</div>
</body></html>
